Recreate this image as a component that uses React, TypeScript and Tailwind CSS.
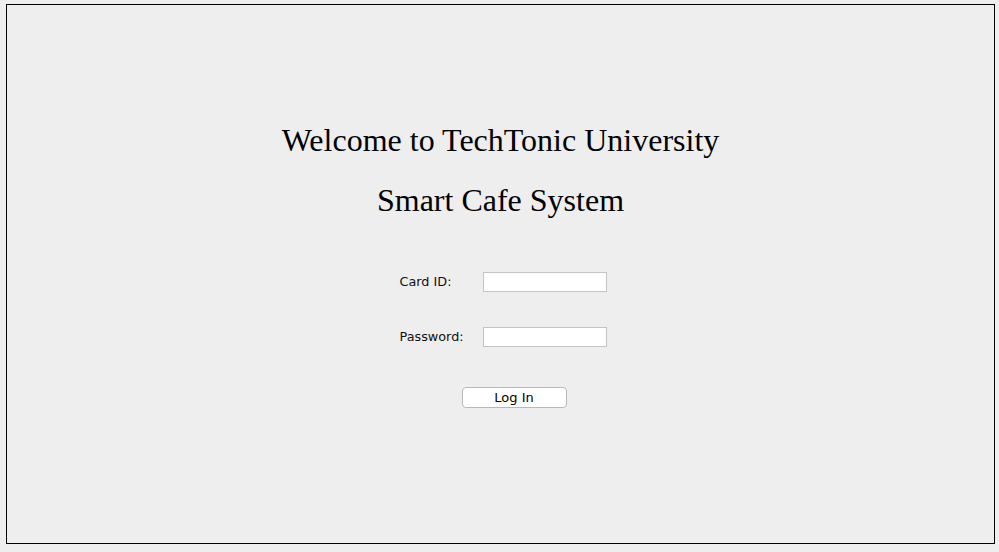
export default function App() {
  return (
    <div className="w-[999px] h-[552px] bg-[#eeeeee] pt-[4px] pl-[6px]">
      <div className="w-[989px] h-[540px] border border-black bg-[#eeeeee] flex flex-col items-center">
        <h1 className="mt-[116px] text-[32px] leading-[38px] text-black font-['Liberation_Serif',serif]">
          Welcome to TechTonic University
        </h1>
        <h2 className="mt-[22px] text-[32px] leading-[38px] text-black font-['Liberation_Serif',serif]">
          Smart Cafe System
        </h2>

        <div className="mt-[53px] ml-[5px] w-[207px] flex flex-col font-['DejaVu_Sans',sans-serif] text-[12.8px] text-[#111]">
          <div className="flex items-center h-[20px]">
            <label className="w-[83px]">Card ID:</label>
            <input className="w-[124px] h-[20px] bg-white border border-[#c4c4c4] outline-none" />
          </div>
          <div className="flex items-center h-[20px] mt-[35px]">
            <label className="w-[83px]">Password:</label>
            <input
              type="password"
              className="w-[124px] h-[20px] bg-white border border-[#c4c4c4] outline-none"
            />
          </div>
          <button className="mt-[40px] ml-[62px] w-[105px] h-[21px] rounded-[4px] bg-white border border-[#b8b8b8] text-[13px] text-black leading-none">
            Log In
          </button>
        </div>
      </div>
    </div>
  );
}
